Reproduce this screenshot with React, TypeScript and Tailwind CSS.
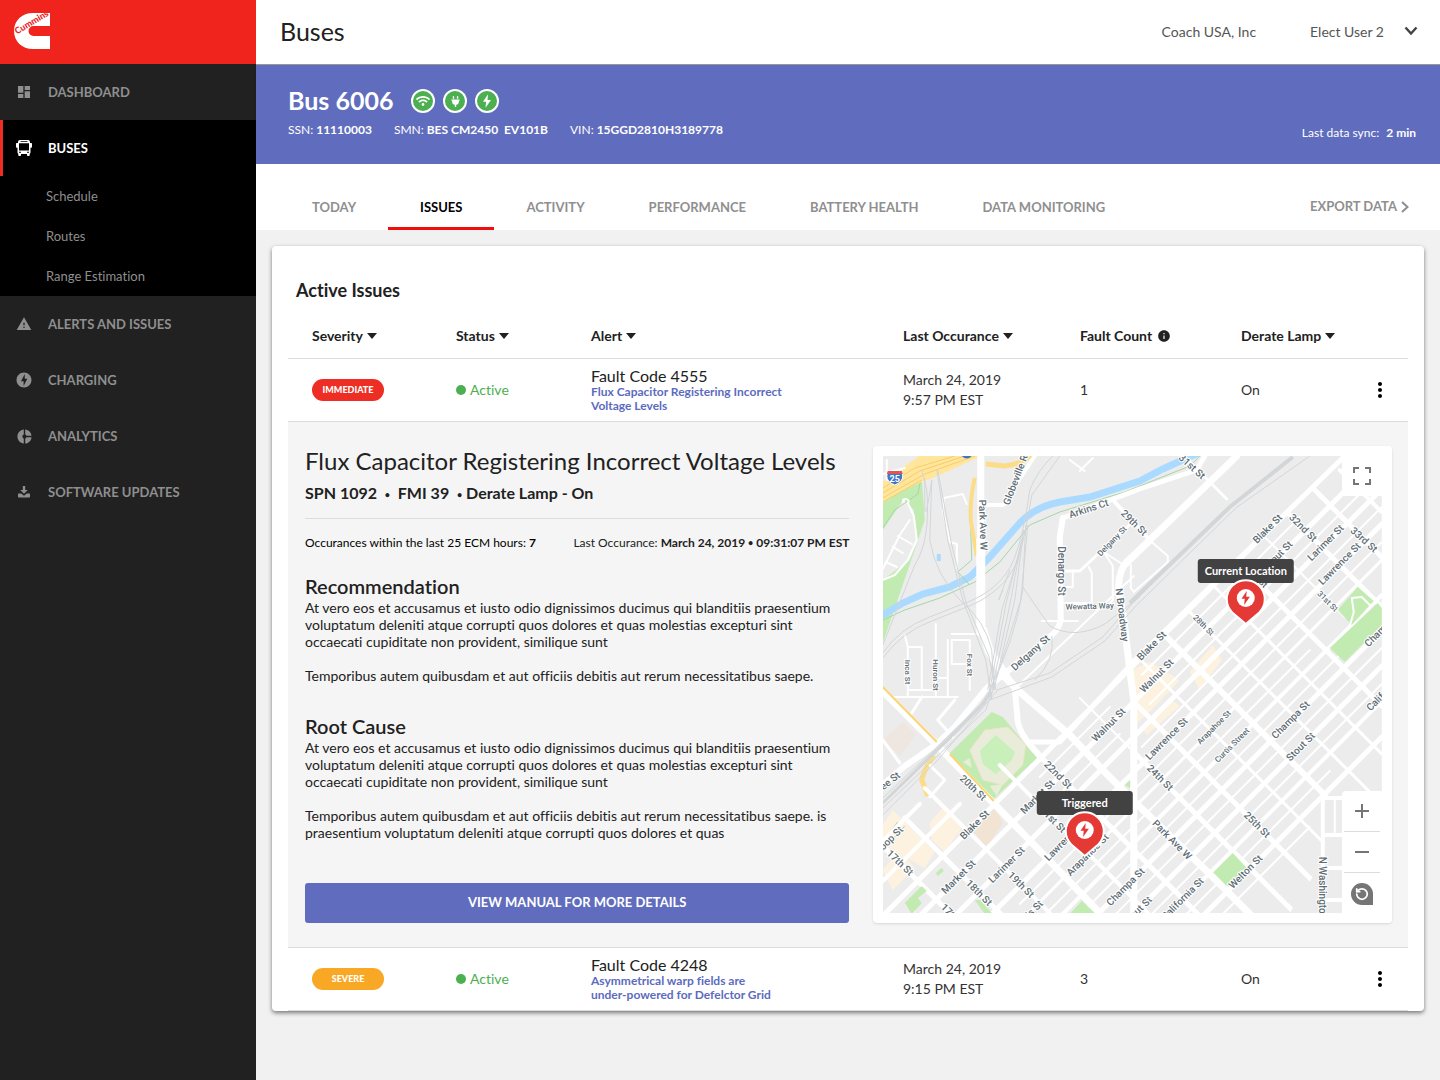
import type { ReactNode } from "react";
import {
  MdAdd,
  MdDashboard,
  MdDonutSmall,
  MdInfo,
  MdMoreVert,
  MdOfflineBolt,
  MdRemove,
  MdWarning,
} from "react-icons/md";
import { FaPlug, FaWifi } from "react-icons/fa";
import { RotateCcw } from "lucide-react";

const BOLT = "M13.5 2 6 13.2h4.6L9.8 22 18 10.4h-5.2L13.500 2z";

function Logo() {
  return (
    <svg viewBox="0 0 36 36" className="size-9 overflow-visible" role="img" aria-label="Cummins">
      <path
        d="M36 0H19C8 0 0 7.500 0 18s8 18 19 18h17V23H19.500a5 5 0 0 1 0-10H36z"
        fill="#fff"
      />
      <text
        x="3"
        y="21.500"
        transform="rotate(-31 3 21.500)"
        fill="#ee231d"
        fontSize="9"
        className="font-[Lato] font-black"
      >
        Cummins
      </text>
    </svg>
  );
}

function BusIcon() {
  return (
    <svg viewBox="0 0 16 16" className="size-4" aria-hidden="true">
      <path
        fill="currentColor"
        fillRule="evenodd"
        d="M4 0h8a2 2 0 0 1 2 1.700V3h1.200c.5 0 .8.3.8.800V7c0 .5-.3.800-.8.800H14.500V12.500c0 .600-.3 1-.8 1.200V15c0 .6-.4 1-1 1h-.700c-.6 0-1-.4-1-1v-1H5v1c0 .6-.4 1-1 1h-.7c-.6 0-1-.4-1-1v-1.300c-.5-.2-.8-.6-.8-1.200V7.800H.800C.3 7.800 0 7.500 0 7V3.800C0 3.300.3 3 .8 3H2V1.700A2 2 0 0 1 4 0zM4.500 1.200v.900h7v-.900zM3 3.200v7.300h10V3.200zM3 11.800v1h2v-1zM11 11.800v1h2v-1z"
      />
    </svg>
  );
}

function DownloadIcon() {
  return (
    <svg viewBox="0 0 12 12" className="size-3" aria-hidden="true">
      <path
        fill="currentColor"
        d="M4.800 0h2.400v4H9.800L6 7.700 2.200 4h2.600zM.6 7.600h2.600L6 9.700l2.800-2.100h2.600a.6.600 0 0 1 .6.600v2.600a.6.600 0 0 1-.6.600H.6a.6.600 0 0 1-.6-.6V8.200a.6.600 0 0 1 .6-.6z"
      />
    </svg>
  );
}

function NavItem({ icon, label, active }: { icon: ReactNode; label: string; active?: boolean }) {
  return (
    <a
      href="#"
      className={
        active
          ? "flex h-14 items-center border-l-[3px] border-[#ee2e24] text-[13px] font-bold text-white"
          : "flex h-14 items-center border-l-[3px] border-transparent text-[13px] font-bold text-[#8f8f8f]"
      }
    >
      <span className="ml-[11px] flex w-5 justify-center">{icon}</span>
      <span className="ml-[14px] pt-px">{label}</span>
    </a>
  );
}

function Sidebar() {
  return (
    <aside className="w-64 shrink-0 bg-[#212121]">
      <div className="flex h-16 items-center bg-[#f0231d] pb-[2px] pl-[14px]">
        <Logo />
      </div>
      <nav aria-label="Main">
        <NavItem icon={<MdDashboard size={16} />} label="DASHBOARD" />
        <div className="bg-black">
          <NavItem icon={<BusIcon />} label="BUSES" active />
          {["Schedule", "Routes", "Range Estimation"].map((item) => (
            <a key={item} href="#" className="flex h-10 items-center pl-[46px] pt-px text-[13px] text-[#8f8f8f]">
              {item}
            </a>
          ))}
        </div>
        <NavItem icon={<MdWarning size={16} />} label="ALERTS AND ISSUES" />
        <NavItem icon={<MdOfflineBolt size={18} />} label="CHARGING" />
        <NavItem icon={<MdDonutSmall size={17} />} label="ANALYTICS" />
        <NavItem icon={<DownloadIcon />} label="SOFTWARE UPDATES" />
      </nav>
    </aside>
  );
}

function StatusBadge({ label, children }: { label: string; children: ReactNode }) {
  return (
    <span
      role="img"
      aria-label={label}
      className="flex size-6 items-center justify-center rounded-full border-2 border-white bg-[#4caf50] text-white"
    >
      {children}
    </span>
  );
}

function Banner() {
  return (
    <section className="flex h-[99px] items-start justify-between bg-[#606dbe] px-8 text-xs text-white shadow">
      <div>
        <div className="mt-5 flex h-8 items-center">
          <h2 className="pb-[2px] text-[25px] font-bold leading-[30px]">Bus 6006</h2>
          <div className="ml-[18px] flex gap-2">
            <StatusBadge label="Online">
              <FaWifi size={14} />
            </StatusBadge>
            <StatusBadge label="Plugged in">
              <FaPlug size={11} />
            </StatusBadge>
            <StatusBadge label="Charging">
              <svg viewBox="0 0 24 24" className="size-4">
                <path d={BOLT} fill="currentColor" />
              </svg>
            </StatusBadge>
          </div>
        </div>
        <dl className="mt-[5px] flex gap-[22px]">
          {[
            ["SSN:", "11110003"],
            ["SMN:", "BES CM2450\u00a0 EV101B"],
            ["VIN:", "15GGD2810H3189778"],
          ].map(([k, v]) => (
            <div key={k} className="flex gap-[3px]">
              <dt>{k}</dt>
              <dd className="font-bold">{v}</dd>
            </div>
          ))}
        </dl>
      </div>
      <p className="-mr-2 mt-[60px]">
        Last data sync: <b className="ml-1">2 min</b>
      </p>
    </section>
  );
}

const TABS = ["TODAY", "ISSUES", "ACTIVITY", "PERFORMANCE", "BATTERY HEALTH", "DATA MONITORING"];

function Tabs() {
  return (
    <div className="flex h-[66px] justify-between bg-white pl-6 pr-[31px] text-[13px] font-bold text-[#8f8f8f]">
      <nav aria-label="Bus" className="flex">
        {TABS.map((t) => (
          <a
            key={t}
            href="#"
            aria-current={t === "ISSUES" ? "page" : undefined}
            className={
              t === "ISSUES"
                ? "flex items-center border-b-[3px] border-[#f20d0d] px-8 pt-6 text-black"
                : "flex items-center border-b-[3px] border-transparent px-8 pt-6"
            }
          >
            {t}
          </a>
        ))}
      </nav>
      <button className="flex items-center gap-1 pt-[19px]">
        EXPORT DATA
        <svg viewBox="0 0 8 12" className="h-3 w-2" aria-hidden="true">
          <path d="M1 1l5.500 5L1 11" fill="none" stroke="currentColor" strokeWidth="2" />
        </svg>
      </button>
    </div>
  );
}

type Street = { d: string; w: number };

const ROADS: Street[] = [
  { d: "M981 456V550L982 627L988 650L1003 673L1020 692L1070 735L1103 770L1134 801L1160 826L1213 877L1250 914", w: 7 },
  { d: "M981 540V632", w: 9 },
  { d: "M983 630L990 652L1006 676", w: 9 },
  { d: "M1003 676L1015 688L1018 722Q1020 732 1031 746L1042 758", w: 6 },
  { d: "M1063 518L1060 537L1061 620Q1059 630 1050 637L987 688L955 727L937 744L905 766L883 785", w: 6 },
  { d: "M1063 518L1140 489L1197 470L1205 456", w: 5 },
  { d: "M1115 502L1150 540", w: 4 },
  { d: "M1186 458L1227 499", w: 3 },
  { d: "M1237 456L1150 540L1127 562Q1118 572 1119 590L1124 620L1130 670L1134 700V913", w: 7 },
  { d: "M1063 571H1080L1135 520", w: 3 },
  { d: "M1089 567L1092 573V603H1062M1104 552L1113 566V600L1108 606M1104 552L1124 565M1073 573V587H1062", w: 2 },
  { d: "M1128 565L1152 542L1168 556L1168 562L1134 592L1131 588V565", w: 2 },
  { d: "M1042 621H1078", w: 2 },
  { d: "M1014 690L1134 576", w: 2 },
  { d: "M1127 669L1060 742L1030 742", w: 5 },
  { d: "M987 505H1003Q1010 500 1011 492L1035 456", w: 4 },
  { d: "M967 504L963 494L944 498L943 510L950 542L957 544V568", w: 2 },
  { d: "M905 635L908 647V697M908 647H922V690M936 624V697M948 640V697M952 640H970V690M952 640V664H970M952 634H978M908 690H936M887 697H958M936 678H948", w: 2 },
  { d: "M887 460V480M883 474L905 468M1070 460L1085 471M1080 471L1093 458", w: 2 },
  { d: "M883 691L937 745L1013 823L1100 913", w: 7 },
  { d: "M883 740L900 763", w: 3 },
  { d: "M955 700L938 720L953 737M922 697L912 713", w: 3 },
  { d: "M930 797L945 780L930 765", w: 3 },
  { d: "M904 502C900 498 912 498 908 503L914 516L917 540L908 560L895 575L883 580M883 569L900 535L910 520M886 562L897 567M893 547L903 553M898 536L912 544", w: 2 },
];

/* Streets that run south-west to north-east: x of both ends, y at x = 1134 and width. */
const RISING: [number, number, number, number][] = [
  [883, 960, 630, 4],
  [883, 1382, 665, 5],
  [883, 1382, 702, 5],
  [883, 1382, 737, 5],
  [890, 1382, 772, 5],
  [950, 1382, 808, 3],
  [1000, 1382, 843, 4],
  [1030, 1382, 878, 5],
  [1060, 1382, 914, 5],
  [1120, 1382, 949, 4],
  [1190, 1382, 985, 5],
  [883, 920, 590, 4],
  [1040, 1110, 683, 2],
  [1142, 1300, 683, 2],
  [1150, 1382, 720, 2],
  [1142, 1382, 755, 2],
  [1040, 1120, 720, 2],
  [1020, 1382, 790, 2],
  [1040, 1310, 826, 2],
  [1060, 1382, 861, 2],
  [1090, 1382, 896, 2],
  [1150, 1382, 932, 2],
  [1150, 1330, 967, 2],
  [1190, 1310, 1003, 2],
];

/* Streets that run north-west to south-east: x of both ends, y - x and width. */
const FALLING: [number, number, number, number][] = [
  [883, 970, -37, 5],
  [905, 1010, -87, 5],
  [925, 1050, -137, 4],
  [1000, 1150, -235, 4],
  [1042, 1200, -284, 5],
  [1080, 1140, -382, 2],
  [1134, 1300, -382, 5],
  [1134, 1340, -432, 5],
  [1142, 1340, -481, 3],
  [1165, 1345, -530, 6],
  [1190, 1382, -578, 3],
  [1215, 1382, -628, 3],
  [1240, 1382, -676, 5],
  [1265, 1345, -728, 2],
  [1285, 1382, -775, 5],
  [1297, 1382, -825, 5],
  [1340, 1382, -870, 4],
];

const RAILS = [
  "M883 653Q900 628 930 617L960 605Q1000 592 1014 560Q1024 535 1030 490Q1038 470 1053 456",
  "M883 658Q902 632 932 621L962 609Q1004 594 1018 560Q1027 530 1032 495L1060 456",
  "M925 478V510Q926 520 932 480L930 540Q936 575 960 600Q985 620 992 650L994 690",
  "M937 470L948 540L963 600L986 660L992 700",
  "M938 470L952 545L966 602L989 656L996 690",
  "M922 470L927 490Q931 540 915 565L883 645",
  "M1023 587Q1040 612 1050 626Q1075 640 1105 624L1140 597",
  "M997 690L1050 673L1103 637L1132 604L1230 507L1293 457",
  "M990 700L1052 677L1105 641L1136 606L1236 508L1310 456",
  "M1052 636Q1056 660 1035 680",
  "M1026 525Q1024 560 1023 590Q1015 640 990 690",
  "M1028 525L1021 600L996 680",
  "M1024 530L1015 600L994 690",
  "M1023 535L1010 605L992 690",
  "M1022 540L1006 605L990 690",
  "M1022 545L1002 610L988 690",
  "M1010 570L999 600L1003 590",
  "M994 680L985 705L937 752L883 803",
  "M996 682L986 710L940 754L883 808",
  "M990 690L982 703L934 750L883 798",
  "M998 690L975 717L938 760L883 815",
];

type MapLabel = [text: string, x: number, y: number, angle: number, size: number];

const LABELS: MapLabel[] = [
  ["Park Ave W", 983, 525, 88, 10],
  ["Globeville R", 1016, 480, -69, 10],
  ["Arkins Ct", 1089, 509, -18, 10],
  ["29th St", 1134, 523, 44, 10],
  ["31st St", 1192, 467, 42, 10],
  ["Denargo St", 1061, 571, 90, 10],
  ["Delgany St", 1112, 541, -46, 8],
  ["Wewatta Way", 1090, 606, -2, 8],
  ["N Broadway", 1122, 615, 83, 10],
  ["Delgany St", 1031, 653, -42, 10],
  ["Inca St", 908, 672, 90, 8],
  ["Huron St", 936, 675, 90, 8],
  ["Fox St", 970, 665, 90, 8],
  ["Blake St", 1268, 529, -45, 10],
  ["32nd St", 1303, 528, 45, 10],
  ["Larimer St", 1326, 543, -45, 10],
  ["33rd St", 1364, 540, 42, 10],
  ["Lawrence St", 1340, 564, -45, 10],
  ["Walnut St", 1276, 558, -45, 10],
  ["31st St", 1328, 601, 45, 8],
  ["28th St", 1204, 625, 45, 8],
  ["29th St", 1256, 576, 45, 9],
  ["Blake St", 1152, 646, -45, 10],
  ["Walnut St", 1157, 676, -45, 10],
  ["Champa St", 1384, 628, -45, 10],
  ["Walnut St", 1109, 725, -45, 10],
  ["Lawrence St", 1167, 739, -45, 10],
  ["Arapahoe St", 1214, 727, -45, 8],
  ["Curtis Street", 1232, 745, -45, 8],
  ["Champa St", 1291, 720, -45, 10],
  ["Stout St", 1301, 747, -45, 10],
  ["California St", 1388, 690, -45, 10],
  ["24th St", 1160, 778, 45, 10],
  ["25th St", 1257, 825, 45, 10],
  ["22nd St", 1058, 775, 45, 10],
  ["20th St", 973, 788, 43, 10],
  ["21st St", 1053, 820, 45, 10],
  ["Blake St", 975, 825, -45, 10],
  ["Market St", 1038, 797, -45, 10],
  ["Market St", 959, 877, -45, 10],
  ["Larimer St", 1007, 865, -45, 10],
  ["Lawrence St", 1066, 840, -45, 10],
  ["Arapahoe St", 1088, 855, -45, 10],
  ["Champa St", 1126, 887, -45, 10],
  ["Park Ave W", 1172, 840, 45, 10],
  ["Welton St", 1246, 872, -45, 10],
  ["California St", 1183, 899, -45, 10],
  ["17th St", 900, 863, 43, 10],
  ["18th St", 979, 893, 45, 10],
  ["19th St", 1021, 885, 45, 10],
  ["17th St", 954, 917, 45, 10],
  ["Wazee St", 883, 787, -38, 10],
  ["Wynkoop St", 883, 847, -45, 10],
  ["N Washington", 1322, 888, 90, 10],
  ["Stout St", 1138, 911, -45, 10],
  ["Curtis St", 1028, 916, -45, 10],
];

function Pin({ x, y, label }: { x: number; y: number; label: string }) {
  return (
    <g transform={`translate(${x} ${y})`}>
      <path
        d="M0 25L-13.500 13.500A19 19 0 1 1 13.500 13.500z"
        fill="#e53935"
        stroke="#fff"
        strokeWidth="2"
      />
      <rect x="-48" y="-40" width="96" height="24" rx="3" fill="#424242" />
      <path d="M-12 -14.500A19 19 0 0 1 12 -14.500" fill="#e53935" stroke="#fff" strokeWidth="2" />
      <circle r="9" fill="#fff" cy="-1" />
      <path d={BOLT} transform="translate(-8.500 -9.500) scale(.7)" fill="#e53935" />
      <text y="-24" textAnchor="middle" fontSize="11" fill="#fff" className="font-[Lato] font-bold">
        {label}
      </text>
    </g>
  );
}

function StreetMap() {
  return (
    <svg
      viewBox="883 456 499 457"
      preserveAspectRatio="xMidYMid slice"
      className="absolute inset-0 size-full"
      role="img"
      aria-label="Map of the current and the triggered location"
    >
      <rect x="883" y="456" width="499" height="457" fill="#ececec" />
      <g fill="#c1ebb0">
        <path d="M883 503L922 478L925 520L915 550L883 643z" />
        <path d="M950 753L992 712L1003 717L1037 758L993 800z" />
        <path d="M1125 785L1134 777V790z" />
        <path d="M883 788L897 778L883 793z" />
      </g>
      <path d="M883 530L904 499L914 510L918 540L910 560L883 580z" fill="#ececec" />
      <g fill="#fdf2df">
        <path d="M883 740L903 722L917 735L900 756z" fill="#efe6df" />
        <path d="M930 823L945 805L962 828L945 852L932 840z" />
        <path d="M883 825L893 810L935 852L925 868L883 845z" />
        <path d="M883 870L900 850L915 868L893 890z" />
        <path d="M972 830L995 808L1003 823L987 847z" fill="#f1e4d3" />
        <path d="M1132 670L1150 662L1180 680L1150 712L1135 725z" />
        <path d="M1142 728L1170 698L1180 706L1147 735z" />
        <path d="M1190 672L1213 645L1222 660L1200 690z" />
        <path d="M905 905L920 890L915 914z" />
      </g>
      <path
        d="M970 750L985 730L1008 727L1026 745L1023 765L1003 785L983 780z"
        fill="#e9ecd9"
        stroke="#f0e0cf"
        strokeWidth="1"
      />
      <path d="M980 751L996 735L1015 752L1012 760L996 774L983 764z" fill="#c9efbb" />
      <path d="M963 762L970 758L972 768zM990 786L1003 784L997 796z" fill="#e9ecd9" />
      <path
        d="M878 618L903 603L923 594L950 587L970 577L990 557L1020 523Q1035 507 1060 502L1090 497L1140 481L1163 469L1205 450"
        fill="none"
        stroke="#aadaff"
        strokeWidth="7"
      />
      <path d="M937 554h4v7h-4z" fill="#aadaff" />
      <g fill="none" stroke="#a5d6a7">
        <path d="M883 620L905 610L940 598L975 582L1000 562L1030 525L1060 512L1125 492L1190 466L1200 456" />
        <path d="M970 500L972 560L958 572L970 585M883 528L895 510L918 494L921 480" />
        <path d="M883 850L905 826M883 842L898 822" />
      </g>
      <path d="M876 487L925 452H990L940 475L922 482L900 492L876 507z" fill="#ffe69c" />
      <path
        d="M883 488L915 468L955 456M883 493L920 471L965 456M883 498L925 474L975 456M883 502L922 480"
        fill="none"
        stroke="#f7cd6b"
      />
      <g fill="none" stroke="#fbdc87" strokeWidth="5">
        <path d="M1033 454Q1020 465 1005 466L986 464" />
        <path d="M975 478Q970 500 971 520L977 556" strokeWidth="4" />
        <path d="M934 755Q924 770 922 780L928 796" />
      </g>
      <g fill="none" stroke="#fff" strokeLinecap="round" strokeLinejoin="round">
        {RISING.map(([x1, x2, at, w]) => (
          <path key={`${x1}-${at}`} d={`M${x1} ${at + 1134 - x1}L${x2} ${at + 1134 - x2}`} strokeWidth={w} />
        ))}
        {FALLING.map(([x1, x2, u, w]) => (
          <path key={`${x1}-${u}`} d={`M${x1} ${x1 + u}L${x2} ${x2 + u}`} strokeWidth={w} />
        ))}
      </g>
      {/* Ground without a street grid: the rail yard and the blocks by Washington Street. */}
      <path d="M1134 655L1343 456H1230L1127 560z" fill="#ececec" />
      <path d="M1324 799L1345 780V913H1290L1324 860z" fill="#ececec" />
      <g fill="#c1ebb0">
        <path d="M1330 648L1378 603L1382 608V625L1345 662z" />
        <path d="M1338 610L1358 587L1374 601L1352 625z" />
        <path d="M1213 873L1233 853L1247 868L1225 888z" />
        <path d="M1070 914L1082 901L1096 914z" />
        <path d="M936 873L942 868L944 871L938 876z" />
        <path d="M975 900L980 900L993 914H985z" />
        <path d="M905 903L922 886L927 891L918 898L922 903L912 914z" />
      </g>
      <g fill="none" stroke="#fff" strokeLinecap="round" strokeLinejoin="round">
        {ROADS.map((r) => (
          <path key={r.d} d={r.d} strokeWidth={r.w} />
        ))}
        <path d="M1130 665L1345 456" strokeWidth="5" />
        <path d="M1342 798H1323V913M1323 835H1342M1323 868H1342M1323 900H1342" strokeWidth="4" />
        <path d="M1335 800V832M1350 626L1354 612L1352 598L1362 597L1370 605" strokeWidth="2" />
      </g>
      <path d="M883 687L937 742M950 754L994 801" stroke="#fbd574" strokeWidth="2" />
      <g fill="none" stroke="#d3d6d8" strokeWidth="1">
        {RAILS.map((d) => (
          <path key={d} d={d} />
        ))}
        <path d="M1130 603L1230 507L1293 457" strokeWidth="4" />
        <path d="M992 692L982 705L936 751L883 803" strokeWidth="3" />
      </g>
      <g
        fill="#5e6d75"
        stroke="#fff"
        strokeWidth="2"
        paintOrder="stroke"
        className="font-[Roboto] font-medium"
      >
        {LABELS.map(([text, x, y, angle, size]) => (
          <text
            key={`${text}-${x}-${y}`}
            x={x}
            y={y + 3}
            transform={`rotate(${angle} ${x} ${y})`}
            fontSize={size}
            textAnchor="middle"
          >
            {text}
          </text>
        ))}
      </g>
      <g>
        <path d="M888 471h14l1 5q0 6-8 9q-8-3-8-9z" fill="#3f76c4" stroke="#fff" />
        <path d="M888 471h14l1 3h-16z" fill="#e0555a" />
        <text x="895" y="482" textAnchor="middle" fontSize="9" fill="#fff" className="font-[Roboto] font-bold">
          25
        </text>
        <path d="M962 456h10q-5 5-10 0z" fill="#3f76c4" />
      </g>
      <Pin x={1246} y={599} label="Current Location" />
      <Pin x={1085} y={831} label="Triggered" />
    </svg>
  );
}

function MapPanel() {
  return (
    <div className="relative rounded bg-white p-[10px] shadow">
      <div className="relative h-full overflow-hidden">
        <StreetMap />
      </div>
      <button
        aria-label="Full screen"
        className="absolute right-0 top-0 flex h-[50px] w-[50px] items-center justify-center rounded bg-white pr-[10px] pt-[10px] text-[#757575]"
      >
        <svg viewBox="0 0 18 18" className="size-[18px]" aria-hidden="true">
          <path
            d="M1 6V1h5M12 1h5v5M17 12v5h-5M6 17H1v-5"
            fill="none"
            stroke="currentColor"
            strokeWidth="2"
          />
        </svg>
      </button>
      <div className="absolute bottom-0 right-0 flex w-[50px] flex-col items-start rounded bg-white pb-[10px] pl-[2px] pr-[12px] text-[#757575]">
        <button
          aria-label="Zoom in"
          className="flex h-[41px] w-9 items-center justify-center border-b border-[#dcdcdc] pt-px"
        >
          <MdAdd size={24} className="shrink-0" />
        </button>
        <button
          aria-label="Zoom out"
          className="flex h-[41px] w-9 items-center justify-center border-b border-[#dcdcdc] pt-px"
        >
          <MdRemove size={24} className="shrink-0" />
        </button>
        <button aria-label="Reset map" className="flex h-10 w-9 items-center justify-center pt-[2px]">
          <span className="flex size-[22px] items-center justify-center rounded-full rounded-br-[2px] bg-[#757575] text-white">
            <RotateCcw size={14} strokeWidth={3} />
          </span>
        </button>
      </div>
    </div>
  );
}

const Caret = () => (
  <svg viewBox="0 0 10 6" className="h-[6px] w-[10px]" aria-hidden="true">
    <path d="M0 0h10L5 6z" fill="currentColor" />
  </svg>
);

function SortHeader({ label, first }: { label: string; first?: boolean }) {
  return (
    <th scope="col" className={first ? "pl-6 font-bold" : "font-bold"}>
      <button className="flex items-center gap-1">
        {label}
        <Caret />
      </button>
    </th>
  );
}

type Issue = {
  severity: string;
  code: string;
  alert: [string, string];
  time: string;
  count: number;
};

function IssueRow({ issue }: { issue: Issue }) {
  return (
    <tr className="h-[63px] border-b border-[#dcdcdc] text-[14px] text-[#333]">
      <td className="pl-6">
        <span
          className={
            issue.severity === "SEVERE"
              ? "flex h-[22px] w-[72px] items-center justify-center rounded-full bg-[#f9a825] pt-px text-[9px] font-black text-white"
              : "flex h-[22px] w-[72px] items-center justify-center rounded-full bg-[#ee2e24] pt-px text-[9px] font-black text-white"
          }
        >
          {issue.severity}
        </span>
      </td>
      <td className="text-[#4caf50]">
        <span className="flex items-center gap-1">
          <span className="size-[10px] rounded-full bg-[#4caf50]" />
          Active
        </span>
      </td>
      <td>
        <p className="text-base leading-[18px] text-[#212121]">{issue.code}</p>
        <a href="#" className="block text-xs font-bold leading-[14px] text-[#5c6bc0]">
          {issue.alert[0]}
          <br />
          {issue.alert[1]}
        </a>
      </td>
      <td className="leading-5">
        March 24, 2019
        <br />
        {issue.time}
      </td>
      <td>{issue.count}</td>
      <td>On</td>
      <td>
        <button aria-label="More actions" className="ml-5 flex text-black">
          <MdMoreVert size={24} />
        </button>
      </td>
    </tr>
  );
}

const LOREM =
  "At vero eos et accusamus et iusto odio dignissimos ducimus qui blanditiis praesentium voluptatum deleniti atque corrupti quos dolores et quas molestias excepturi sint occaecati cupiditate non provident, similique sunt";

const Bullet = () => <span className="align-[1px] text-[9px] leading-none">{"\u2022"}</span>;

function IssueDetail() {
  return (
    <div className="grid grid-cols-[1.05fr_1fr] gap-6 bg-[#f5f5f5] py-6 pl-[17px] pr-4 text-[#212121]">
      <div className="flex min-w-0 flex-col">
        <h3 className="whitespace-nowrap text-2xl leading-[30px]">
          Flux Capacitor Registering Incorrect Voltage Levels
        </h3>
        <p className="mt-[5px] h-6 whitespace-pre text-base font-bold leading-6">
          {"SPN 1092  "}
          <Bullet />
          {"  FMI 39  "}
          <Bullet />
          {" Derate Lamp - On"}
        </p>
        <div className="mt-[13px] flex justify-between border-t border-[#dcdcdc] pt-4 text-xs leading-4">
          <p className="text-black">
            Occurances within the last 25 ECM hours: <b>7</b>
          </p>
          <p>
            Last Occurance:{" "}
            <b>
              March 24, 2019 <Bullet /> 09:31:07 PM EST
            </b>
          </p>
        </div>
        <h4 className="mt-[23px] text-xl font-semibold leading-6">Recommendation</h4>
        <p className="mt-px text-[14px] leading-[17px]">{LOREM}</p>
        <p className="mt-[17px] text-[14px] leading-[17px]">
          Temporibus autem quibusdam et aut officiis debitis aut rerum necessitatibus saepe.
        </p>
        <h4 className="mt-[30px] text-xl font-semibold leading-6">Root Cause</h4>
        <p className="mt-px text-[14px] leading-[17px]">{LOREM}</p>
        <p className="mt-[17px] text-[14px] leading-[17px]">
          Temporibus autem quibusdam et aut officiis debitis aut rerum necessitatibus saepe. is praesentium voluptatum
          deleniti atque corrupti quos dolores et quas
        </p>
        <button className="mt-[42px] h-10 rounded-[3px] bg-[#606dbe] text-[13px] font-bold text-white">
          VIEW MANUAL FOR MORE DETAILS
        </button>
      </div>
      <MapPanel />
    </div>
  );
}

function IssuesCard() {
  return (
    <section className="m-4 rounded bg-white px-4 pt-8 shadow-[0_2px_4px_rgba(0,0,0,0.5)]">
      <h2 className="ml-2 text-lg font-bold leading-6 text-[#212121]">Active Issues</h2>
      <table className="mt-3 w-full table-fixed text-left">
        <colgroup>
          <col className="w-[168px]" />
          <col className="w-[135px]" />
          <col />
          <col className="w-[177px]" />
          <col className="w-[161px]" />
          <col className="w-[107px]" />
          <col className="w-[60px]" />
        </colgroup>
        <thead>
          <tr className="h-11 border-b border-[#dcdcdc] text-[14px] text-[#212121]">
            <SortHeader label="Severity" first />
            <SortHeader label="Status" />
            <SortHeader label="Alert" />
            <SortHeader label="Last Occurance" />
            <th scope="col" className="font-bold">
              <span className="flex items-center gap-[5px]">
                Fault Count
                <MdInfo size={14} />
              </span>
            </th>
            <SortHeader label="Derate Lamp" />
            <td />
          </tr>
        </thead>
        <tbody>
          <IssueRow
            issue={{
              severity: "IMMEDIATE",
              code: "Fault Code 4555",
              alert: ["Flux Capacitor Registering Incorrect", "Voltage Levels"],
              time: "9:57 PM EST",
              count: 1,
            }}
          />
          <tr className="border-b border-[#dcdcdc]">
            <td colSpan={7} className="p-0">
              <IssueDetail />
            </td>
          </tr>
          <IssueRow
            issue={{
              severity: "SEVERE",
              code: "Fault Code 4248",
              alert: ["Asymmetrical warp fields are", "under-powered for Defelctor Grid"],
              time: "9:15 PM EST",
              count: 3,
            }}
          />
        </tbody>
      </table>
    </section>
  );
}

export default function App() {
  return (
    <div className="flex min-h-screen bg-[#f1f1f1] font-[Lato,sans-serif] text-[#212121] [font-variant-ligatures:none]">
      <Sidebar />
      <main className="min-w-0 flex-1">
        <header className="flex h-[65px] items-center justify-between border-b border-[#9b9b9b] bg-white pb-[2px] pl-6 pr-[22px]">
          <h1 className="text-[25px] leading-8">Buses</h1>
          <div className="flex items-center text-[14px] text-[#555]">
            <span>Coach USA, Inc</span>
            <button className="ml-[54px] flex items-center">
              Elect User 2
              <svg viewBox="0 0 14 10" className="ml-5 h-[10px] w-[14px]" aria-hidden="true">
                <path d="M1.500 1.500L7 7.500l5.500-6" fill="none" stroke="#424242" strokeWidth="2.400" />
              </svg>
            </button>
          </div>
        </header>
        <Banner />
        <Tabs />
        <IssuesCard />
      </main>
    </div>
  );
}
